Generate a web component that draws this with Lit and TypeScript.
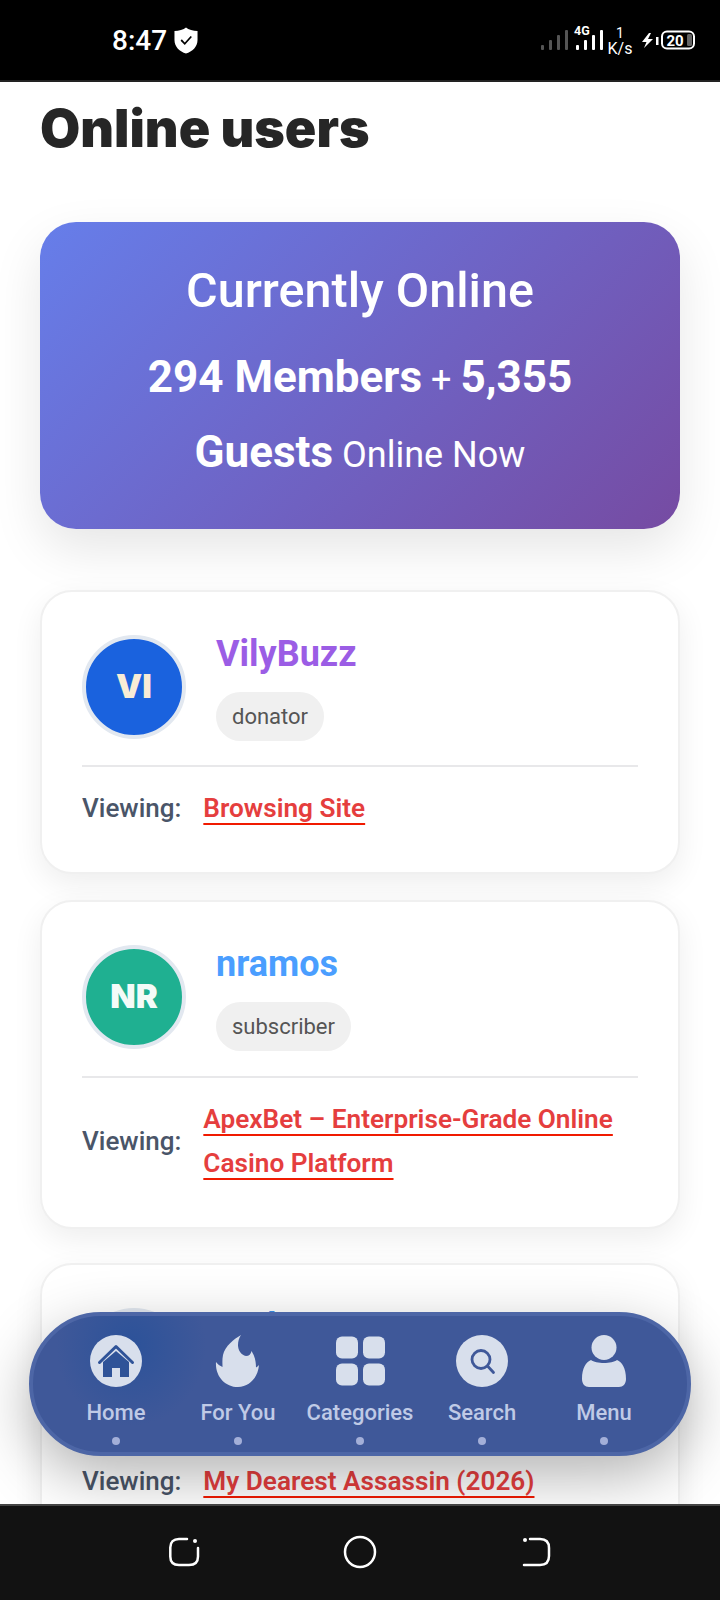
import { LitElement, html, css, svg } from "lit";
import { customElement } from "lit/decorators.js";

const homeIcon = svg`<circle cx="26" cy="26" r="26" fill="#d8dfec"/><path d="M9.500 27.500 L26 11.500 L42.500 27.500" fill="none" stroke="#2f5398" stroke-width="3" stroke-linejoin="round" stroke-linecap="round"/><path d="M13 27 L26 16 L39 27 V42 H30 V33 H22 V42 H13 Z" fill="#2f5398"/>`;
const fireIcon = svg`<path d="M29 0 C22 4 13 11 11 20 C10 25 10.500 29 10.500 32 C8 31 5.500 29 4 27 C3 41 13 52 26 52 C38 52 46 42 47 30 C46 31 45 32 44 32.500 C44 27 43 21 39.500 16 C39 19 37 21 34 21 C29 20 26 15 26 10 C26 6 27 3 29 0 Z" fill="#d8dfec"/>`;
const catIcon = svg`<g fill="#d8dfec"><rect x="2" y="1.500" width="22" height="22" rx="6"/><rect x="29" y="1.500" width="22" height="22" rx="6"/><rect x="2" y="28.500" width="22" height="22" rx="6"/><rect x="29" y="28.500" width="22" height="22" rx="6"/></g>`;
const searchIcon = svg`<circle cx="26" cy="26" r="26" fill="#d8dfec"/><circle cx="25" cy="24.500" r="9" fill="none" stroke="#3f5899" stroke-width="2.800"/><path d="M31.500 31 L37.500 37.500" stroke="#3f5899" stroke-width="2.800" stroke-linecap="round"/>`;
const userIcon = svg`<circle cx="26" cy="12.500" r="12.500" fill="#d8dfec"/><path d="M13 25 C18 29 34 29 39 25 C44 27 48 33 48 44 C48 49 45 52 41 52 H11 C7 52 4 49 4 44 C4 33 8 27 13 25 Z" fill="#d8dfec"/>`;

const navItems = [
  { label: "Home", icon: homeIcon },
  { label: "For You", icon: fireIcon },
  { label: "Categories", icon: catIcon },
  { label: "Search", icon: searchIcon },
  { label: "Menu", icon: userIcon },
];

const users = [
  { initials: "VI", name: "VilyBuzz", nameColor: "#9b5de5", role: "donator", avatar: "#1a62de", initialsColor: "#f8ecd6", viewing: "Browsing Site" },
  { initials: "NR", name: "nramos", nameColor: "#4a9eff", role: "subscriber", avatar: "#1fb091", initialsColor: "#f4fbf8", viewing: "ApexBet – Enterprise-Grade Online Casino Platform" },
  { initials: "ME", name: "Mel", nameColor: "#3b8de8", role: "member", avatar: "#1598b8", initialsColor: "#ffffff", viewing: "My Dearest Assassin (2026)" },
];

@customElement("app-root")
export class AppRoot extends LitElement {
  static styles = css`
    :host {
      display: block;
      position: relative;
      width: 720px;
      height: 1600px;
      overflow: hidden;
      background: #fff;
      font-family: Roboto, "Liberation Sans", sans-serif;
    }
    * { box-sizing: border-box; }
    .status {
      height: 82px;
      background: #000;
      border-bottom: 2px solid #222;
      display: flex;
      justify-content: space-between;
      align-items: flex-start;
      padding: 0 21px 0 112px;
      color: #fff;
    }
    .clock {
      display: flex;
      align-items: center;
      gap: 7px;
      height: 80px;
      font-size: 28px;
      font-weight: 500;
    }
    .cluster { display: block; margin-top: 20px; }
    .cluster text { font-family: Roboto, sans-serif; fill: #fff; }
    main { padding: 16px 40px 0; }
    h1 {
      margin: 0;
      font-family: Inter, sans-serif;
      font-size: 52px;
      font-weight: 900;
      line-height: 62px;
      color: #262626;
    }
    .hero {
      margin-top: 62px;
      height: 307px;
      padding: 40px;
      border-radius: 36px;
      background: linear-gradient(135deg, #667eea 0%, #764ba2 100%);
      box-shadow: 0 20px 50px rgba(0, 0, 0, 0.1);
      color: #fff;
      text-align: center;
    }
    .hero h2 {
      margin: 0;
      font-size: 48.500px;
      font-weight: 500;
      line-height: 58px;
    }
    .hero p {
      margin: 23px 0 0;
      font-size: 36px;
      line-height: 75px;
    }
    .hero strong { font-size: 44px; font-weight: 700; line-height: 1; }
    .cards {
      margin-top: 61px;
      display: flex;
      flex-direction: column;
      gap: 26px;
    }
    .card {
      background: #fff;
      border: 2px solid #f0f0f0;
      border-radius: 32px;
      padding: 40px 40px 42px;
      box-shadow: 0 10px 30px rgba(0, 0, 0, 0.07);
    }
    .card:nth-child(2) { margin-bottom: 8px; }
    .card:nth-child(2) .head { padding-bottom: 25px; }
    .head {
      display: flex;
      align-items: center;
      gap: 30px;
      padding-bottom: 24px;
      border-bottom: 2px solid #e8e8ea;
    }
    .avatar {
      flex: none;
      width: 104px;
      height: 104px;
      border-radius: 50%;
      border: 4px solid #e2e8f0;
      padding-bottom: 2px;
      display: flex;
      align-items: center;
      justify-content: center;
      font-family: Inter, sans-serif;
      font-size: 33px;
      font-weight: 900;
    }
    .info { display: flex; flex-direction: column; align-items: flex-start; gap: 16px; }
    .name { font-size: 36px; font-weight: 700; line-height: 44px; }
    .role {
      background: #f0f0f0;
      color: #555;
      font-size: 22px;
      line-height: 33px;
      padding: 8px 16px;
      border-radius: 25px;
    }
    .viewing {
      display: flex;
      align-items: center;
      gap: 22px;
      margin-top: 19px;
    }
    .viewing span {
      flex: none;
      color: #4a5568;
      font-size: 26px;
      font-weight: 500;
    }
    .viewing a {
      color: #e53e3e;
      font-size: 26.200px;
      font-weight: 600;
      line-height: 44px;
      text-decoration: underline solid #f01a00 2px;
      text-underline-offset: 5.500px;
    }
    .nav {
      position: absolute;
      left: 29px;
      top: 1312px;
      width: 662px;
      height: 144px;
      border-radius: 72px;
      border: 4px solid #4d66a6;
      background: radial-gradient(ellipse 75px 80px at 98px 30px, #2c5299, rgba(63, 88, 153, 0)), #3f5899;
      box-shadow: 0 20px 60px rgba(0, 0, 0, 0.3);
      display: flex;
      justify-content: center;
      padding-top: 19px;
    }
    .item {
      width: 122px;
      display: flex;
      flex-direction: column;
      align-items: center;
    }
    .item svg { display: block; }
    .item b {
      margin-top: 11px;
      font-size: 22px;
      line-height: 30px;
      font-weight: 500;
      color: #bfcae6;
      white-space: nowrap;
    }
    .item i {
      margin-top: 9px;
      width: 8px;
      height: 8px;
      border-radius: 50%;
      background: #a3afd8;
    }
    .sys {
      position: absolute;
      left: 0;
      right: 0;
      bottom: 0;
      height: 96px;
      background: #121212;
      border-top: 2px solid #444;
      display: flex;
      justify-content: center;
      align-items: flex-start;
    }
    .sys svg { display: block; margin-top: 30px; }
    .sys .home { margin-top: 29px; }
  `;

  render() {
    return html`
      <div class="status">
        <div class="clock">
          8:47
          <svg width="24" height="27" viewBox="0 0 25 27" preserveAspectRatio="none">
            <path d="M12.500 0.500 C15 2.500 20 4 24.500 4 V13 C24.500 20 19 24.500 12.500 26.500 C6 24.500 0.500 20 0.500 13 V4 C5 4 10 2.500 12.500 0.500 Z" fill="#fff"/>
            <path d="M7.500 13 L11.200 16.800 L18 9.500" fill="none" stroke="#000" stroke-width="1.800"/>
          </svg>
        </div>
        <svg class="cluster" width="158" height="40" viewBox="0 0 158 40">
          <g fill="#555">
            <rect x="0" y="25" width="3" height="5" rx="1"/>
            <rect x="8" y="20" width="3" height="10" rx="1"/>
            <rect x="16" y="15" width="3" height="15" rx="1"/>
            <rect x="24" y="10" width="3" height="20" rx="1"/>
          </g>
          <g fill="#fff">
            <rect x="35" y="25" width="3" height="5" rx="1"/>
            <rect x="43" y="20" width="3" height="10" rx="1"/>
            <rect x="51" y="15" width="3" height="15" rx="1"/>
            <rect x="59" y="10" width="3" height="20" rx="1"/>
          </g>
          <text x="33" y="15" font-size="12.500" font-weight="700">4G</text>
          <text x="79" y="18" font-size="14" text-anchor="middle">1</text>
          <text x="79" y="34" font-size="16" text-anchor="middle">K/s</text>
          <path d="M108 13 L101 22 H105.500 L103 28 L112 19 H107 L110 13 Z" fill="#fff"/>
          <rect x="115" y="17" width="2.500" height="8" fill="#fff"/>
          <rect x="121" y="11.500" width="32" height="17" rx="5" fill="none" stroke="#fff" stroke-width="2"/>
          <rect x="146" y="14" width="5" height="12" rx="1.500" fill="#666"/>
          <text x="134" y="25.500" font-size="15" font-weight="700" text-anchor="middle">20</text>
        </svg>
      </div>

      <main>
        <h1>Online users</h1>
        <section class="hero">
          <h2>Currently Online</h2>
          <p><strong>294 Members</strong> + <strong>5,355 Guests</strong> Online Now</p>
        </section>
        <div class="cards">
          ${users.map(
            (u) => html`
              <article class="card">
                <div class="head">
                  <div class="avatar" style="background:${u.avatar};color:${u.initialsColor}">${u.initials}</div>
                  <div class="info">
                    <div class="name" style="color:${u.nameColor}">${u.name}</div>
                    <div class="role">${u.role}</div>
                  </div>
                </div>
                <div class="viewing">
                  <span>Viewing:</span>
                  <a>${u.viewing}</a>
                </div>
              </article>
            `
          )}
        </div>
      </main>

      <nav class="nav">
        ${navItems.map(
          (n) => html`
            <div class="item">
              <svg width="52" height="52" viewBox="0 0 52 52">${n.icon}</svg>
              <b>${n.label}</b>
              <i></i>
            </div>
          `
        )}
      </nav>

      <div class="sys">
        <svg width="174" height="32" viewBox="0 0 174 32">
          <path d="M18 3 H10 C4.500 3 1.300 6 1.300 11.500 V20.500 C1.300 26 4.500 29 10 29 H20 C26 29 29 26 29 20.500 V12" fill="none" stroke="#fff" stroke-width="2.500" stroke-linecap="round"/>
          <circle cx="26" cy="5" r="2" fill="#fff"/>
        </svg>
        <svg class="home" width="34" height="34" viewBox="0 0 34 34">
          <circle cx="17" cy="17" r="15" fill="none" stroke="#fff" stroke-width="2.500"/>
        </svg>
        <svg width="174" height="32" viewBox="0 0 174 32">
          <path d="M153 3 H163 C169 3 172 6 172 12 V20 C172 26 169 29 163 29 H147" fill="none" stroke="#fff" stroke-width="2.500" stroke-linecap="round"/>
          <circle cx="148" cy="4" r="2" fill="#fff"/>
        </svg>
      </div>
    `;
  }
}
